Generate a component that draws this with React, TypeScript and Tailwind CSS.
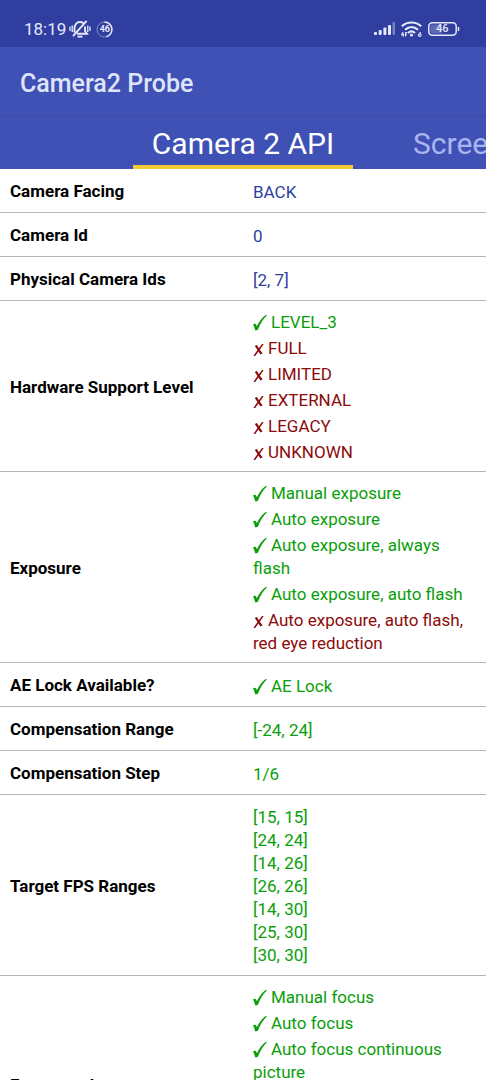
type Item = { text: string; ok: boolean };

type Row = {
  label: string;
  text?: string[];
  items?: Item[];
  info?: boolean;
};

const rows: Row[] = [
  { label: "Camera Facing", text: ["BACK"], info: true },
  { label: "Camera Id", text: ["0"], info: true },
  { label: "Physical Camera Ids", text: ["[2, 7]"], info: true },
  {
    label: "Hardware Support Level",
    items: [
      { text: "LEVEL_3", ok: true },
      { text: "FULL", ok: false },
      { text: "LIMITED", ok: false },
      { text: "EXTERNAL", ok: false },
      { text: "LEGACY", ok: false },
      { text: "UNKNOWN", ok: false },
    ],
  },
  {
    label: "Exposure",
    items: [
      { text: "Manual exposure", ok: true },
      { text: "Auto exposure", ok: true },
      { text: "Auto exposure, always flash", ok: true },
      { text: "Auto exposure, auto flash", ok: true },
      { text: "Auto exposure, auto flash, red eye reduction", ok: false },
    ],
  },
  { label: "AE Lock Available?", items: [{ text: "AE Lock", ok: true }] },
  { label: "Compensation Range", text: ["[-24, 24]"] },
  { label: "Compensation Step", text: ["1/6"] },
  {
    label: "Target FPS Ranges",
    text: ["[15, 15]", "[24, 24]", "[14, 26]", "[26, 26]", "[14, 30]", "[25, 30]", "[30, 30]"],
  },
  {
    label: "Focus modes",
    items: [
      { text: "Manual focus", ok: true },
      { text: "Auto focus", ok: true },
      { text: "Auto focus continuous picture", ok: true },
      { text: "Auto focus continuous video", ok: true },
      { text: "Auto focus macro", ok: true },
      { text: "Auto focus EDOF", ok: false },
    ],
  },
];

const Tick = () => (
  <svg className="mr-1 inline-block h-4 w-[14px] align-[-3px]" viewBox="0 0 14 16" fill="currentColor" role="img" aria-label="Supported">
    <path d="M0 9.6C1 8.4 2.6 8.4 3.1 9.5L3.9 11.2C6 6.8 9 2.6 12.6 0L14 .3C10 4.2 7.4 8.6 5 14.4C4.2 15.2 3 15.5 2 15.2C1.7 13.2 1.1 11.3 0 9.6Z" />
  </svg>
);

const Cross = () => (
  <svg className="mr-1 inline-block h-3 w-[11px] align-[-2px]" viewBox="0 0 11 12" fill="currentColor" role="img" aria-label="Not supported">
    <path d="M1.8 1.9L3.9 1L5.9 4.3L9 0L10.7 .1L6.8 5.7L9.6 9.3L7.6 10.4L5.4 7.5L2.2 12L.4 11.9L4.5 6.1Z" />
  </svg>
);

const StatusBar = () => (
  <div className="flex h-[47px] shrink-0 items-center justify-between bg-[#303f9f] pt-[11px] pr-[26px] pl-6 text-[#e4e8fb]">
    <div className="flex items-center">
      <span className="text-[17px] leading-5">18:19</span>
      <svg className="ml-[3px] h-5 w-[22px]" viewBox="0 0 22 20" fill="none" stroke="currentColor" strokeWidth="1.9" aria-hidden="true">
        <path d="M5.5 13.5V9.5C5.5 5.7 7.7 3 11 3C12.4 3 13.5 3.4 14.4 4.2M16 7.5V12L18 14.8H8M17.6 1.8L4 17.2" />
        <path d="M8.5 17.6H13.5" />
        <path d="M1 7.5V12M3.2 6.5V13M18.8 6.5V13M21 7.5V12" strokeWidth="1.3" />
      </svg>
      <span className="relative ml-[5px] flex size-[17px] items-center justify-center">
        <svg className="absolute inset-0" viewBox="0 0 17 17" fill="none" stroke="currentColor" aria-hidden="true">
          <circle cx="8.5" cy="8.5" r="7.5" opacity=".45" />
          <path d="M8.5 1A7.5 7.5 0 0 1 10.5 15.7" strokeWidth="1.5" />
        </svg>
        <span className="text-[9px] leading-3 font-bold">46</span>
      </span>
    </div>
    <div className="flex items-center">
      <svg className="h-[14px] w-[22px]" viewBox="0 0 22 14" fill="currentColor" aria-hidden="true">
        <rect x="0" y="10" width="3" height="3" rx="1" />
        <rect x="4.7" y="8" width="3" height="5" rx="1" />
        <rect x="9.4" y="5.5" width="3" height="7.5" rx="1" />
        <rect x="14" y="3" width="3" height="10" rx="1" />
        <rect x="18.5" y="0" width="2.5" height="13" rx="1" opacity=".4" />
      </svg>
      <svg className="ml-[5px] h-4 w-[21px]" viewBox="0 0 21 16" fill="none" stroke="currentColor" strokeWidth="2.1" aria-hidden="true">
        <path d="M.8 5.2C6.4 .2 14.6 .2 20.2 5.2M4 8.8C7.9 5.2 13.1 5.2 17 8.8M7 12C9.1 10.1 11.9 10.1 14 12" />
        <circle cx="10.5" cy="14" r="1.6" fill="currentColor" stroke="none" />
        <path d="M2 11L.6 14H3.2M2.4 12.4V15.6M4.6 15.6V11.5H6.2M4.6 13.4H6M19.6 11L17.8 13.6M18.8 12.8A1.3 1.3 0 1 1 18.7 15.4A1.3 1.3 0 0 1 18.8 12.8" strokeWidth="1.1" />
      </svg>
      <span className="relative ml-[6px] flex h-[14px] w-8 items-center pl-2">
        <svg className="absolute inset-0" viewBox="0 0 32 14" fill="none" stroke="currentColor" aria-hidden="true">
          <rect x=".8" y=".8" width="27.4" height="12.4" rx="3.5" strokeWidth="1.5" />
          <path d="M4 2.5H14V11.5H4A1.5 1.5 0 0 1 2.5 10V4A1.5 1.5 0 0 1 4 2.5Z" fill="currentColor" stroke="none" opacity=".25" />
          <path d="M30.5 5V9" strokeWidth="1.5" />
        </svg>
        <span className="text-[11px] leading-[14px] font-medium">46</span>
      </span>
    </div>
  </div>
);

const Tabs = () => (
  <nav className="flex h-[52px] shrink-0 justify-center overflow-hidden bg-[#3f51b5]" aria-label="Camera sections">
    <div className="flex w-[220px] shrink-0">
      <button className="w-full shrink-0 border-b-4 border-[#f4c932] pt-[6px] text-3xl leading-8 whitespace-nowrap text-white" aria-current="page">
        Camera 2 API
      </button>
      <button className="ml-10 shrink-0 border-b-4 border-transparent px-5 pt-[6px] text-3xl leading-8 whitespace-nowrap text-[#a9b4f0]">
        Screen
      </button>
    </div>
  </nav>
);

const Value = ({ row }: { row: Row }) => {
  if (row.items) {
    return (
      <ul className="space-y-[3px]">
        {row.items.map((item) => (
          <li key={item.text} className={item.ok ? "text-[#0a9e0a]" : "text-[#8b0a0a]"}>
            {item.ok ? <Tick /> : <Cross />}
            {item.text}
          </li>
        ))}
      </ul>
    );
  }
  return (
    <div className={row.info ? "text-[#303f9f]" : "text-[#0a9e0a]"}>
      {row.text?.map((line) => <p key={line}>{line}</p>)}
    </div>
  );
};

const App = () => {
  return (
    <div className="flex h-screen flex-col overflow-hidden bg-white font-['Roboto',sans-serif]">
      <StatusBar />
      <header className="flex h-[70px] shrink-0 items-center border-b border-[#3a4aa8] bg-[#3f51b5] px-5 pt-1">
        <h1 className="text-[25px] leading-8 font-medium text-[#dfe4fa]">Camera2 Probe</h1>
      </header>
      <Tabs />
      <main className="min-h-0 flex-1 overflow-y-auto [scrollbar-width:none]">
        <table className="w-full table-fixed border-collapse text-[17px] leading-[23px]">
          <tbody>
            {rows.map((row) => (
              <tr key={row.label} className="border-b border-[#b5b5b5]">
                <th scope="row" className="w-1/2 px-[10px] pt-[11px] pb-[9px] text-left align-middle font-bold text-black">
                  {row.label}
                </th>
                <td className={row.items ? "px-[10px] pt-[10px] pb-[7px] align-middle" : "px-[10px] pt-[11px] pb-2 align-middle"}>
                  <Value row={row} />
                </td>
              </tr>
            ))}
          </tbody>
        </table>
      </main>
    </div>
  );
};

export default App;
